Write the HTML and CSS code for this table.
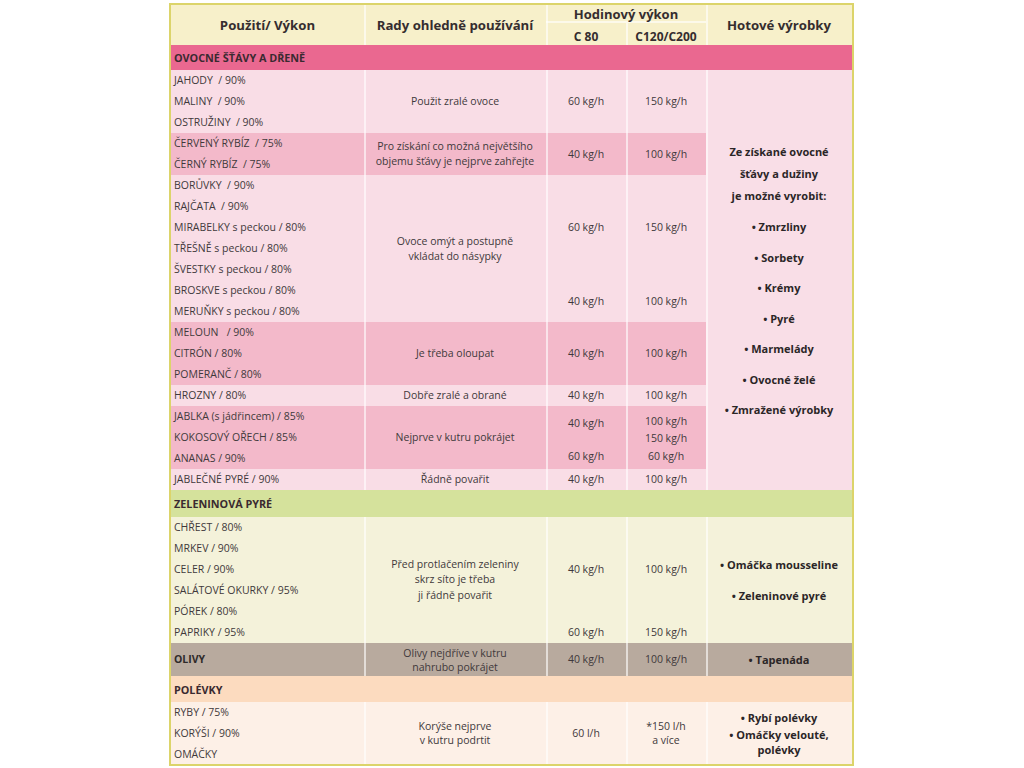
FILE: index.html
```html
<!DOCTYPE html>
<html lang="cs">
<head>
<meta charset="utf-8">
<title>Použití / Výkon</title>
<link rel="stylesheet" href="styles.css">
</head>
<body>
<div class="page">
<table class="sheet">
  <colgroup>
    <col class="c-use"><col class="c-tip"><col class="c-80"><col class="c-120"><col class="c-prod">
  </colgroup>
  <thead>
    <tr class="h1">
      <th class="n big" rowspan="2">Použití/ Výkon</th>
      <th class="big" rowspan="2">Rady ohledně používání</th>
      <th class="perf" colspan="2">Hodinový výkon</th>
      <th class="big" rowspan="2">Hotové výrobky</th>
    </tr>
    <tr class="h2">
      <th class="model">C 80</th>
      <th class="model">C120/C200</th>
    </tr>
  </thead>
  <tbody class="fruit">
    <tr class="sec sec-fruit"><td class="n" colspan="5">OVOCNÉ ŠŤÁVY A DŘENĚ</td></tr>
    <tr class="r lt">
      <td class="n">JAHODY&nbsp; / 90%</td>
      <td rowspan="3">Použit zralé ovoce</td>
      <td rowspan="3">60 kg/h</td>
      <td rowspan="3">150 kg/h</td>
      <td class="prod" rowspan="20">
        <div class="intro">Ze získané ovocné<br>šťávy a dužiny<br>je možné vyrobit:</div>
        <div class="bullets">
          <div>• Zmrzliny</div>
          <div>• Sorbety</div>
          <div>• Krémy</div>
          <div>• Pyré</div>
          <div>• Marmelády</div>
          <div>• Ovocné želé</div>
          <div>• Zmražené výrobky</div>
        </div>
      </td>
    </tr>
    <tr class="r lt"><td class="n">MALINY&nbsp; / 90%</td></tr>
    <tr class="r lt"><td class="n">OSTRUŽINY&nbsp; / 90%</td></tr>
    <tr class="r dk">
      <td class="n">ČERVENÝ RYBÍZ&nbsp; / 75%</td>
      <td rowspan="2">Pro získání co možná největšího<br>objemu šťávy je nejprve zahřejte</td>
      <td rowspan="2">40 kg/h</td>
      <td rowspan="2">100 kg/h</td>
    </tr>
    <tr class="r dk"><td class="n">ČERNÝ RYBÍZ&nbsp; / 75%</td></tr>
    <tr class="r lt">
      <td class="n">BORŮVKY&nbsp; / 90%</td>
      <td rowspan="7">Ovoce omýt a postupně<br>vkládat do násypky</td>
      <td rowspan="5">60 kg/h</td>
      <td rowspan="5">150 kg/h</td>
    </tr>
    <tr class="r lt"><td class="n">RAJČATA&nbsp; / 90%</td></tr>
    <tr class="r lt"><td class="n">MIRABELKY s peckou / 80%</td></tr>
    <tr class="r lt"><td class="n">TŘEŠNĚ s peckou / 80%</td></tr>
    <tr class="r lt"><td class="n">ŠVESTKY s peckou / 80%</td></tr>
    <tr class="r lt">
      <td class="n">BROSKVE s peckou / 80%</td>
      <td rowspan="2">40 kg/h</td>
      <td rowspan="2">100 kg/h</td>
    </tr>
    <tr class="r lt"><td class="n">MERUŇKY s peckou / 80%</td></tr>
    <tr class="r dk">
      <td class="n">MELOUN&nbsp;&nbsp; / 90%</td>
      <td rowspan="3">Je třeba oloupat</td>
      <td rowspan="3">40 kg/h</td>
      <td rowspan="3">100 kg/h</td>
    </tr>
    <tr class="r dk"><td class="n">CITRÓN / 80%</td></tr>
    <tr class="r dk"><td class="n">POMERANČ / 80%</td></tr>
    <tr class="r lt">
      <td class="n">HROZNY / 80%</td>
      <td>Dobře zralé a obrané</td>
      <td>40 kg/h</td>
      <td>100 kg/h</td>
    </tr>
    <tr class="r dk">
      <td class="n">JABLKA (s jádřincem) / 85%</td>
      <td rowspan="3">Nejprve v kutru pokrájet</td>
      <td class="pair" rowspan="3">40 kg/h<br><br>60 kg/h</td>
      <td class="triple" rowspan="3">100 kg/h<br>150 kg/h<br>60 kg/h</td>
    </tr>
    <tr class="r dk"><td class="n">KOKOSOVÝ OŘECH / 85%</td></tr>
    <tr class="r dk"><td class="n">ANANAS / 90%</td></tr>
    <tr class="r lt">
      <td class="n">JABLEČNÉ PYRÉ / 90%</td>
      <td>Řádně povařit</td>
      <td>40 kg/h</td>
      <td>100 kg/h</td>
    </tr>
  </tbody>
  <tbody class="veg">
    <tr class="sec sec-veg"><td class="n" colspan="5">ZELENINOVÁ PYRÉ</td></tr>
    <tr class="r vg">
      <td class="n">CHŘEST / 80%</td>
      <td class="tall" rowspan="6">Před protlačením zeleniny<br>skrz síto je třeba<br>ji řádně povařit</td>
      <td rowspan="5">40 kg/h</td>
      <td rowspan="5">100 kg/h</td>
      <td class="prod prod-veg" rowspan="6">
        <div>• Omáčka mousseline</div>
        <div>• Zeleninové pyré</div>
      </td>
    </tr>
    <tr class="r vg"><td class="n">MRKEV / 90%</td></tr>
    <tr class="r vg"><td class="n">CELER / 90%</td></tr>
    <tr class="r vg"><td class="n">SALÁTOVÉ OKURKY / 95%</td></tr>
    <tr class="r vg"><td class="n">PÓREK / 80%</td></tr>
    <tr class="r vg">
      <td class="n">PAPRIKY / 95%</td>
      <td>60 kg/h</td>
      <td>150 kg/h</td>
    </tr>
    <tr class="oli">
      <td class="n strong">OLIVY</td>
      <td class="tight">Olivy nejdříve v kutru<br>nahrubo pokrájet</td>
      <td>40 kg/h</td>
      <td>100 kg/h</td>
      <td class="prod">• Tapenáda</td>
    </tr>
  </tbody>
  <tbody class="soup">
    <tr class="sec sec-soup"><td class="n" colspan="5">POLÉVKY</td></tr>
    <tr class="r sp">
      <td class="n">RYBY / 75%</td>
      <td class="tight" rowspan="3">Korýše nejprve<br>v kutru podrtit</td>
      <td rowspan="3">60 l/h</td>
      <td class="tight" rowspan="3">*150 l/h<br>a více</td>
      <td class="prod prod-soup" rowspan="3">
        <div>• Rybí polévky</div>
        <div class="wrap">• Omáčky velouté,<br>polévky</div>
      </td>
    </tr>
    <tr class="r sp"><td class="n">KORÝŠI / 90%</td></tr>
    <tr class="r sp last"><td class="n">OMÁČKY</td></tr>
  </tbody>
</table>
</div>
</body>
</html>
```

FILE: styles.css
```css
* {
  box-sizing: border-box;
}

html, body {
  margin: 0;
  background: #ffffff;
}

body {
  font-family: "Open Sans", "Noto Sans", sans-serif;
  color: #3f393b;
}

.page {
  padding: 3px 0 0 169px;
}

.sheet {
  width: 685px;
  table-layout: fixed;
  border-collapse: separate;
  border-spacing: 0;
  border: 2px solid #dcd46a;
  font-size: 10.5px;
}

.c-use { width: 193px; }
.c-tip { width: 182px; }
.c-80 { width: 80px; }
.c-120 { width: 80px; }
.c-prod { width: 146px; }

.sheet th,
.sheet td {
  padding: 0;
  text-align: center;
  vertical-align: middle;
  line-height: 15px;
  font-weight: 400;
  box-shadow: inset 2px 0 0 rgba(255, 255, 255, 0.6);
}

.sheet .n {
  box-shadow: none;
  text-align: left;
  padding-left: 3px;
  white-space: nowrap;
}

/* header */
.sheet thead th {
  background: #f7f0ca;
  color: #352d2f;
  font-weight: 700;
}

.sheet th.big {
  font-size: 13.2px;
}

.sheet th.n.big {
  text-align: center;
  padding-left: 0;
}

.sheet th.perf {
  font-size: 13px;
  box-shadow: inset 2px 0 0 rgba(255, 255, 255, 0.6), inset 0 -2px 0 rgba(255, 255, 255, 0.6);
}

.sheet th.model {
  font-size: 12px;
  padding-top: 4px;
}

.h1 { height: 18px; }
.h2 { height: 22px; }

/* rows */
.r { height: 21px; }
.r.last { height: 20px; }

.sec td {
  font-weight: 700;
  font-size: 10.8px;
  color: #3a2a30;
}

.sec-fruit { height: 25px; }
.sec-fruit td { background: #ea6890; }

.sec-veg { height: 27px; }
.sec-veg td { background: #d5e29c; }

.sec-soup { height: 26px; }
.sec-soup td { background: #fcdbbf; }

.lt td { background: #f9dde6; }
.dk td { background: #f3b9ca; }
.vg td { background: #f4f2da; }
.sp td { background: #fdf0e7; }

.oli { height: 33px; }
.oli td { background: #b8aa9e; }

.sheet td.strong {
  font-weight: 700;
  color: #2f2a2a;
}

.sheet td.tight {
  line-height: 14px;
}

.sheet td.tall {
  line-height: 15.5px;
}

.sheet td.pair {
  line-height: 16.5px;
  padding-top: 4px;
}

.sheet td.triple {
  line-height: 17.5px;
  padding-top: 3px;
}

/* products column */
.sheet td.prod {
  font-weight: 700;
  font-size: 11px;
  color: #2b2627;
}

.lt td.prod {
  background: #f9dee7;
  padding-top: 7px;
}

.intro {
  line-height: 22px;
}

.bullets {
  margin-top: 5px;
  line-height: 30.5px;
}

.prod-veg div {
  line-height: 31px;
}

.prod-soup {
  line-height: 16px;
}

.prod-soup .wrap {
  margin-top: 2px;
}
```
